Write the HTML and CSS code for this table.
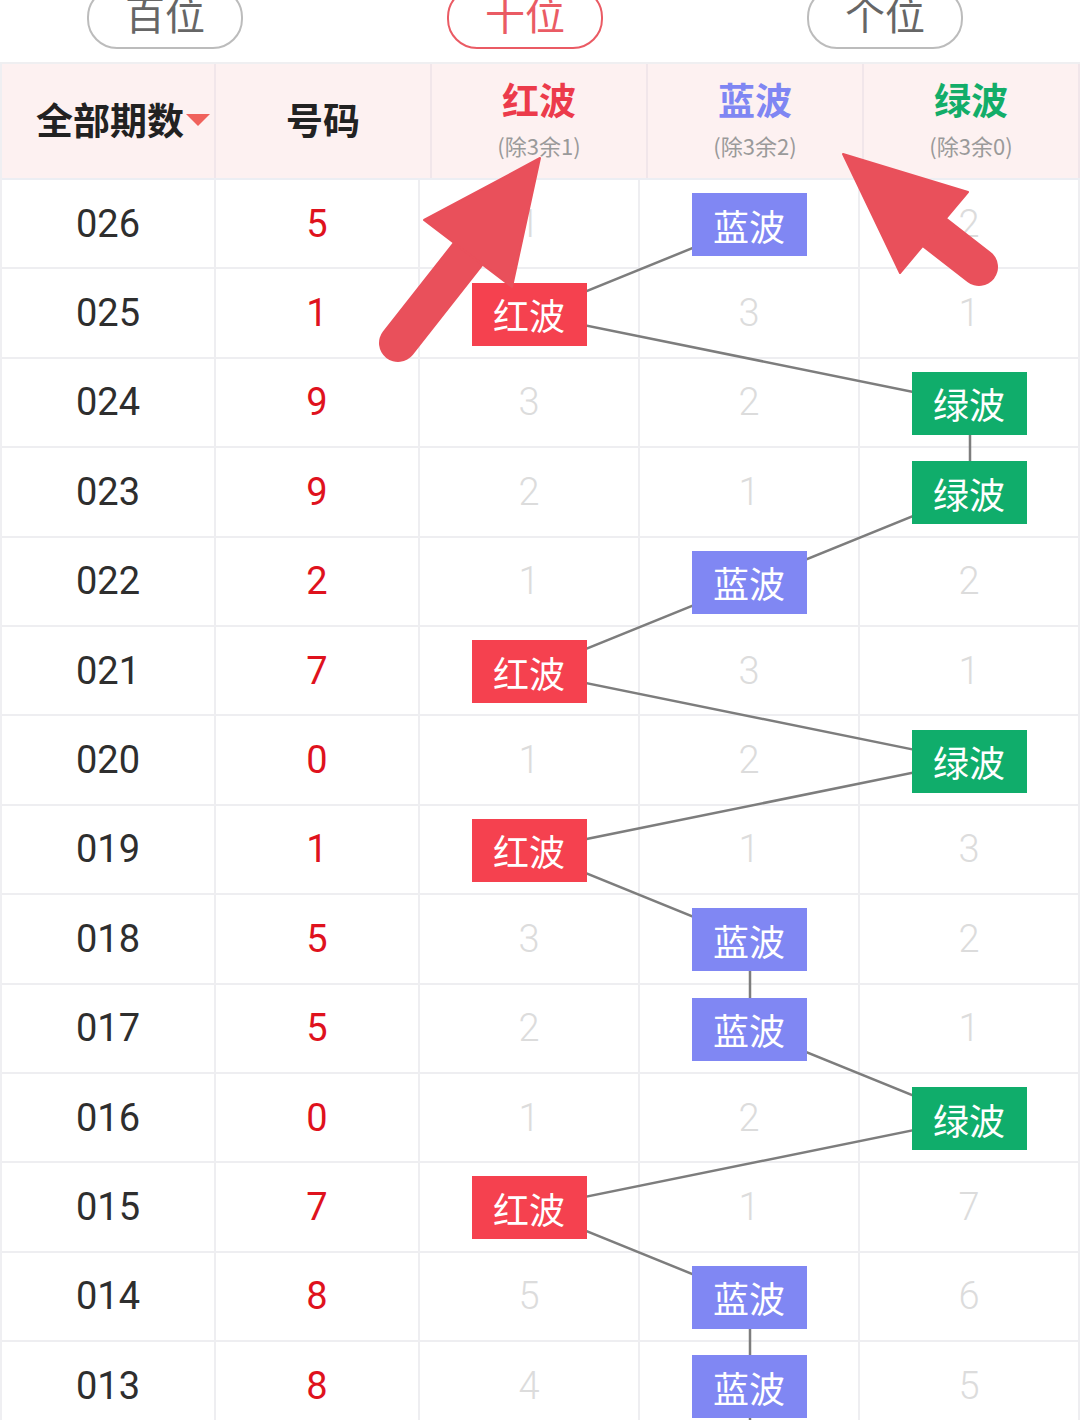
FILE: index.html
```html
<!DOCTYPE html>
<html lang="zh">
<head>
<meta charset="utf-8">
<title>走势图</title>
<link rel="stylesheet" href="styles.css">
</head>
<body>
<div class="page">
  <div class="tabs">
    <div class="tab-cell"><div class="pill">百位</div></div>
    <div class="tab-cell"><div class="pill active">十位</div></div>
    <div class="tab-cell"><div class="pill">个位</div></div>
  </div>

  <div class="table">
    <div class="thead">
      <div class="th th-main"><span class="label">全部期数<span class="caret"></span></span></div>
      <div class="th th-main">号码</div>
      <div class="th"><div class="wave red">红波</div><div class="sub">(除3余1)</div></div>
      <div class="th"><div class="wave blue">蓝波</div><div class="sub">(除3余2)</div></div>
      <div class="th"><div class="wave green">绿波</div><div class="sub">(除3余0)</div></div>
    </div>

    <div class="tbody">
      <svg class="lines" viewBox="0 0 1080 1252" width="1080" height="1252">
        <polyline points="750,44.7 530,134.1 970,223.5 970,312.9 750,402.3 530,491.7 970,581.1 530,670.5 750,759.9 750,849.3 970,938.7 530,1028.1 750,1117.5 750,1206.9 750,1300" fill="none" stroke="#7d7d7d" stroke-width="2.5"/>
      </svg>

      <div class="tr"><div class="td period">026</div><div class="td num">5</div><div class="td miss">1</div><div class="td"><span class="badge b-blue">蓝波</span></div><div class="td miss">2</div></div>
      <div class="tr"><div class="td period">025</div><div class="td num">1</div><div class="td"><span class="badge b-red">红波</span></div><div class="td miss">3</div><div class="td miss">1</div></div>
      <div class="tr"><div class="td period">024</div><div class="td num">9</div><div class="td miss">3</div><div class="td miss">2</div><div class="td"><span class="badge b-green">绿波</span></div></div>
      <div class="tr"><div class="td period">023</div><div class="td num">9</div><div class="td miss">2</div><div class="td miss">1</div><div class="td"><span class="badge b-green">绿波</span></div></div>
      <div class="tr"><div class="td period">022</div><div class="td num">2</div><div class="td miss">1</div><div class="td"><span class="badge b-blue">蓝波</span></div><div class="td miss">2</div></div>
      <div class="tr"><div class="td period">021</div><div class="td num">7</div><div class="td"><span class="badge b-red">红波</span></div><div class="td miss">3</div><div class="td miss">1</div></div>
      <div class="tr"><div class="td period">020</div><div class="td num">0</div><div class="td miss">1</div><div class="td miss">2</div><div class="td"><span class="badge b-green">绿波</span></div></div>
      <div class="tr"><div class="td period">019</div><div class="td num">1</div><div class="td"><span class="badge b-red">红波</span></div><div class="td miss">1</div><div class="td miss">3</div></div>
      <div class="tr"><div class="td period">018</div><div class="td num">5</div><div class="td miss">3</div><div class="td"><span class="badge b-blue">蓝波</span></div><div class="td miss">2</div></div>
      <div class="tr"><div class="td period">017</div><div class="td num">5</div><div class="td miss">2</div><div class="td"><span class="badge b-blue">蓝波</span></div><div class="td miss">1</div></div>
      <div class="tr"><div class="td period">016</div><div class="td num">0</div><div class="td miss">1</div><div class="td miss">2</div><div class="td"><span class="badge b-green">绿波</span></div></div>
      <div class="tr"><div class="td period">015</div><div class="td num">7</div><div class="td"><span class="badge b-red">红波</span></div><div class="td miss">1</div><div class="td miss">7</div></div>
      <div class="tr"><div class="td period">014</div><div class="td num">8</div><div class="td miss">5</div><div class="td"><span class="badge b-blue">蓝波</span></div><div class="td miss">6</div></div>
      <div class="tr"><div class="td period">013</div><div class="td num">8</div><div class="td miss">4</div><div class="td"><span class="badge b-blue">蓝波</span></div><div class="td miss">5</div></div>
    </div>
  </div>

  <svg class="arrows" viewBox="0 0 1080 1420" width="1080" height="1420">
    <g fill="#e9505b" stroke="#e9505b">
      <line x1="468" y1="254" x2="398" y2="343" stroke-width="38" stroke-linecap="round"/>
      <polygon points="540,158 512,287 424,220" stroke-width="2" stroke-linejoin="round"/>
      <line x1="934" y1="232" x2="979" y2="267" stroke-width="38" stroke-linecap="round"/>
      <polygon points="843,154 900,273 968,192" stroke-width="2" stroke-linejoin="round"/>
    </g>
  </svg>
</div>
</body>
</html>
```

FILE: styles.css
```css
* { box-sizing: border-box; }

html, body {
  margin: 0;
  padding: 0;
  background: #ffffff;
}

body {
  font-family: Roboto, "Noto Sans CJK SC", "Noto Sans", sans-serif;
  width: 1080px;
  height: 1420px;
  overflow: hidden;
}

.page {
  position: relative;
  width: 1080px;
  height: 1420px;
  overflow: hidden;
}

/* ---------- tabs ---------- */
.tabs {
  display: grid;
  grid-template-columns: 330px 330px 330px;
  column-gap: 30px;
  height: 64px;
  border-bottom: 2px solid #efeff1;
  overflow: hidden;
}

.tab-cell {
  display: flex;
  justify-content: center;
  align-items: flex-start;
}

.pill {
  width: 156px;
  height: 62px;
  margin-top: -13px;
  border: 2px solid #bcbcbc;
  border-radius: 30px;
  color: #666666;
  font-family: "Noto Sans CJK SC", sans-serif;
  font-size: 40px;
  line-height: 40px;
  display: flex;
  justify-content: center;
  align-items: center;
  padding-bottom: 10px;
}

.pill.active {
  border-color: #ea5b64;
  color: #ea5b64;
}

/* ---------- table ---------- */
.table {
  border-left: 2px solid #efeff2;
}

.thead {
  display: grid;
  grid-template-columns: 214px 216px 216px 216px 216px;
  height: 116px;
  background: #fdf1f1;
  border-bottom: 2px solid #eceef3;
}

.th {
  border-right: 2px solid #f1e6ea;
  display: flex;
  flex-direction: column;
  align-items: center;
  justify-content: center;
  font-family: "Noto Sans CJK SC", sans-serif;
}

.th-main {
  flex-direction: row;
  font-size: 37px;
  font-weight: 700;
  color: #222222;
  padding-bottom: 4px;
}

.label {
  position: relative;
  left: 2px;
}

.caret {
  position: absolute;
  left: 100%;
  top: 50%;
  width: 0;
  height: 0;
  border-left: 12px solid transparent;
  border-right: 12px solid transparent;
  border-top: 12px solid #f0625c;
  margin-left: 2px;
  margin-top: -5px;
}

.wave {
  font-size: 37px;
  font-weight: 700;
  line-height: 44px;
  margin-top: -6px;
}

.wave.red { color: #ec3b4b; }
.wave.blue { color: #7f86f3; }
.wave.green { color: #13ad69; }

.sub {
  font-size: 22px;
  line-height: 30px;
  color: #9a9a9a;
  margin-top: 9px;
}

.tbody {
  position: relative;
}

.lines {
  position: absolute;
  left: -2px;
  top: 0;
  z-index: 1;
  overflow: visible;
}

.tr {
  display: grid;
  grid-template-columns: 214px 204px 220px 220px 220px;
  height: 89.4px;
  border-bottom: 2px solid #eeeef1;
}

.td {
  border-right: 2px solid #eeeef1;
  display: flex;
  align-items: center;
  justify-content: center;
  font-size: 38px;
}

.td.period {
  color: #2e2e2e;
}

.td.num {
  color: #df121d;
}

.td.miss {
  color: #dcdcdc;
  font-weight: 300;
}

.badge {
  position: relative;
  z-index: 2;
  width: 115px;
  height: 63px;
  display: flex;
  align-items: center;
  justify-content: center;
  color: #ffffff;
  font-family: "Noto Sans CJK SC", sans-serif;
  font-size: 36px;
  margin-top: 2px;
}

.b-red { background: #f5414f; }
.b-blue { background: #8087f3; }
.b-green { background: #10ad6b; }

/* ---------- overlay arrows ---------- */
.arrows {
  position: absolute;
  left: 0;
  top: 0;
  z-index: 5;
  pointer-events: none;
}
```
